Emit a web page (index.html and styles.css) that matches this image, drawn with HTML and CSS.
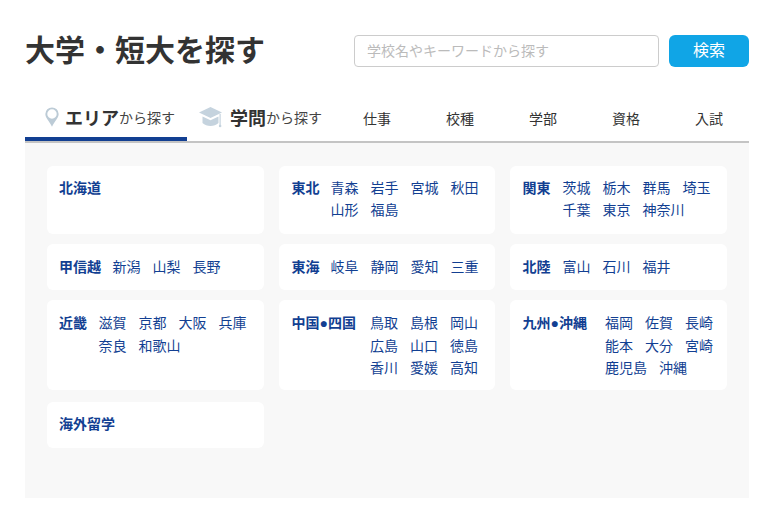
FILE: index.html
```html
<!DOCTYPE html>
<html lang="ja">
<head>
<meta charset="utf-8">
<title>大学・短大を探す</title>
<link rel="stylesheet" href="styles.css">
</head>
<body>
<main class="page">
  <header class="top">
    <h1 class="title">大学・短大を探す</h1>
    <form class="search">
      <input class="search-input" type="text" placeholder="学校名やキーワードから探す">
      <button class="search-btn" type="button">検索</button>
    </form>
  </header>
  <nav class="tabs">
    <a class="tab tab-area active">
      <svg class="pin" width="14" height="20" viewBox="0 0 16 22"><path fill-rule="evenodd" fill="#bccbd6" d="M8 0a7.6 7.6 0 0 1 7.6 7.6c0 4.6-4.6 8.400-7.600 14.400C5 16 .4 12.200.4 7.600A7.600 7.600 0 0 1 8 0zm0 2.200a5.400 5.400 0 1 0 0 10.800 5.400 5.400 0 0 0 0-10.800z"/></svg>
      <b class="tab-strong">エリア</b><span class="tab-sub">から探す</span>
    </a>
    <a class="tab tab-field">
      <svg class="cap" width="23" height="22" viewBox="0 0 23 22"><path fill="#c5d3de" d="M11.500 1 23 6.500 11.500 12 0 6.500z"/><path fill="#c5d3de" d="M3.500 10.500v6.500c2 2 5 3 8 3s6-1 8-3v-6.500l-8 3.800z"/><rect x="20.500" y="8" width="1.200" height="11" fill="#c5d3de"/><circle cx="21.100" cy="20" r="1.300" fill="#c5d3de"/></svg>
      <b class="tab-strong">学問</b><span class="tab-sub">から探す</span>
    </a>
    <a class="tab tab-plain t1">仕事</a>
    <a class="tab tab-plain t2">校種</a>
    <a class="tab tab-plain t3">学部</a>
    <a class="tab tab-plain t4">資格</a>
    <a class="tab tab-plain t5">入試</a>
  </nav>
  <section class="panel">
    <div class="row r1">
      <div class="card"><span class="label">北海道</span></div>
      <div class="card"><span class="label">東北</span><span class="items"><a>青森</a><a>岩手</a><a>宮城</a><a>秋田</a><a>山形</a><a>福島</a></span></div>
      <div class="card"><span class="label">関東</span><span class="items"><a>茨城</a><a>栃木</a><a>群馬</a><a>埼玉</a><a>千葉</a><a>東京</a><a>神奈川</a></span></div>
    </div>
    <div class="row r2">
      <div class="card"><span class="label">甲信越</span><span class="items"><a>新潟</a><a>山梨</a><a>長野</a></span></div>
      <div class="card"><span class="label">東海</span><span class="items"><a>岐阜</a><a>静岡</a><a>愛知</a><a>三重</a></span></div>
      <div class="card"><span class="label">北陸</span><span class="items"><a>富山</a><a>石川</a><a>福井</a></span></div>
    </div>
    <div class="row r3">
      <div class="card"><span class="label">近畿</span><span class="items"><a>滋賀</a><a>京都</a><a>大阪</a><a>兵庫</a><a>奈良</a><a>和歌山</a></span></div>
      <div class="card"><span class="label">中国<span class="dot">●</span>四国</span><span class="items items-mid"><a>鳥取</a><a>島根</a><a>岡山</a><a>広島</a><a>山口</a><a>徳島</a><a>香川</a><a>愛媛</a><a>高知</a></span></div>
      <div class="card"><span class="label">九州<span class="dot">●</span>沖縄</span><span class="items items-wide"><a>福岡</a><a>佐賀</a><a>長崎</a><a>能本</a><a>大分</a><a>宮崎</a><a>鹿児島</a><a>沖縄</a></span></div>
    </div>
    <div class="row r4">
      <div class="card"><span class="label">海外留学</span></div>
    </div>
  </section>
</main>
</body>
</html>
```
FILE: styles.css
```css
* { box-sizing: border-box; }
html, body { margin: 0; padding: 0; background: #fff; }
body { font-family: "Noto Sans CJK JP", "Noto Sans", sans-serif; color: #333; width: 781px; height: 507px; overflow: hidden; }
.page { width: 724px; margin-left: 25px; padding-top: 35px; }
.top { display: flex; justify-content: space-between; align-items: flex-start; height: 62px; }
.title { margin: -2px 0 0; font-size: 30px; line-height: 30px; font-weight: 700; color: #333; }
.search { display: flex; gap: 10px; }
.search-input { width: 305px; height: 32px; border: 1px solid #ccc; border-radius: 4px; padding: 0 12px 2px; font: 14px/28px "Noto Sans CJK JP", sans-serif; outline: 0; }
.search-input::placeholder { color: #bbb; opacity: 1; }
.search-btn { width: 80px; height: 32px; border: 0; border-radius: 6px; background: #10a5e6; color: #fff; font: 16px "Noto Sans CJK JP", sans-serif; padding: 0 0 4px; }
.tabs { display: flex; height: 46px; border-bottom: 2px solid #c4c4c4; }
.tab { display: flex; align-items: center; height: 44px; color: #333; font-size: 14px; white-space: nowrap; padding-bottom: 5px; }
.tab-area { width: 162px; padding-left: 20px; border-bottom: 4px solid #123f92; padding-bottom: 1px; height: 44px; }
.pin { margin-right: 6px; flex: none; }
.cap { margin-right: 8px; flex: none; }
.tab-field { width: 176px; padding-left: 12px; }
.tab-strong { font-size: 18px; font-weight: 700; }
.tab-sub { font-size: 14px; color: #444; }
.tab-plain { width: 83px; justify-content: center; padding-bottom: 3px; }
.t1 { width: 42px; justify-content: flex-start; }
.t2 { margin-left: 7px; width: 96px; justify-content: center; }
.t3 { width: 70px; }
.t4 { width: 96px; }
.t5 { flex: 1; justify-content: flex-end; padding-right: 26px; }
.panel { height: 355px; background: #f8f8f8; padding: 23px 22px 0; display: flex; flex-direction: column; gap: 10px; }
.row { display: grid; grid-template-columns: 217px 216px 217px; gap: 15px; }
.r1 { height: 68px; }
.r2 { height: 46px; }
.r3 { height: 90px; }
.r4 { height: 46px; margin-top: 2px; }
.r1 .card { padding-top: 9.500px; }
.r4 .card { padding-top: 10px; }
.card { display: flex; align-items: flex-start; background: #fff; border-radius: 6px; padding: 11px 0 0 12.500px; font-size: 14px; line-height: 22.500px; color: #123f92; }
.card:first-child { padding-left: 12px; }
.card:first-child .label { margin-right: 11.500px; }
.card:last-child .label { margin-right: 12px; }
.label { font-weight: 700; margin-right: 11px; font-size: 14px; white-space: nowrap; flex: none; }
.dot { font-family: "Liberation Sans", sans-serif; }
.items { display: flex; flex-wrap: wrap; flex: 1; }
.items a { margin-right: 12px; color: #123f92; white-space: nowrap; }
.items-mid { margin-left: 3px; }
.items-wide { margin-left: 6px; }
```
